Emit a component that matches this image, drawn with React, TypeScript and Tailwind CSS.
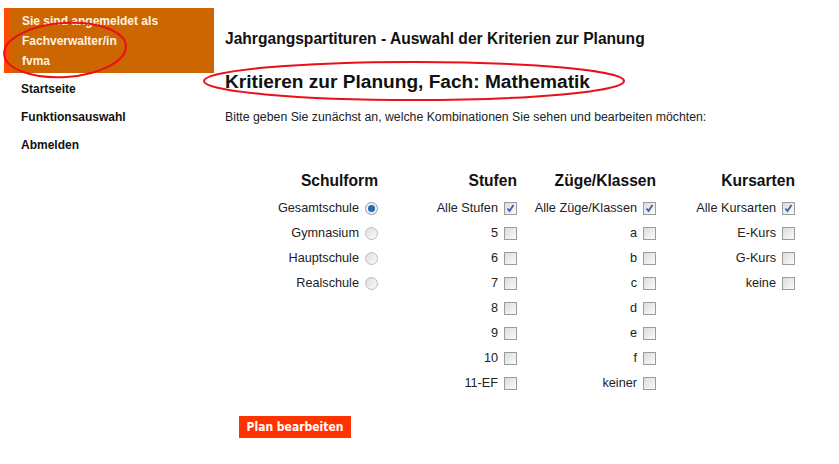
import React from 'react';

type Item = { label: string; checked?: boolean };

const columns: { title: string; type: 'radio' | 'check'; items: Item[] }[] = [
  {
    title: 'Schulform',
    type: 'radio',
    items: [
      { label: 'Gesamtschule', checked: true },
      { label: 'Gymnasium' },
      { label: 'Hauptschule' },
      { label: 'Realschule' },
    ],
  },
  {
    title: 'Stufen',
    type: 'check',
    items: [
      { label: 'Alle Stufen', checked: true },
      { label: '5' },
      { label: '6' },
      { label: '7' },
      { label: '8' },
      { label: '9' },
      { label: '10' },
      { label: '11-EF' },
    ],
  },
  {
    title: 'Züge/Klassen',
    type: 'check',
    items: [
      { label: 'Alle Züge/Klassen', checked: true },
      { label: 'a' },
      { label: 'b' },
      { label: 'c' },
      { label: 'd' },
      { label: 'e' },
      { label: 'f' },
      { label: 'keiner' },
    ],
  },
  {
    title: 'Kursarten',
    type: 'check',
    items: [
      { label: 'Alle Kursarten', checked: true },
      { label: 'E-Kurs' },
      { label: 'G-Kurs' },
      { label: 'keine' },
    ],
  },
];

const CheckBox: React.FC<{ checked?: boolean }> = ({ checked }) => (
  <span className="w-[13px] h-[13px] border border-[#9c9c9c] bg-gradient-to-br from-[#dcdcdc] to-[#fbfbfb] flex items-center justify-center">
    {checked && (
      <svg width="9" height="9" viewBox="0 0 9 9">
        <path d="M1.5 4.5 L3.5 7 L7.5 1" fill="none" stroke="#3d5fa8" strokeWidth="1.8" />
      </svg>
    )}
  </span>
);

const Radio: React.FC<{ checked?: boolean }> = ({ checked }) => (
  <span
    className={`w-[13px] h-[13px] rounded-full border flex items-center justify-center ${
      checked ? 'border-[#8c9fb5] bg-[#eef2f7]' : 'border-[#bdbdbd] bg-gradient-to-br from-[#dedede] to-[#fafafa]'
    }`}
  >
    {checked && <span className="w-[7px] h-[7px] rounded-full bg-[#1d6eb3]" />}
  </span>
);

export default function App() {
  return (
    <div className="relative w-[839px] h-[464px] bg-white text-[#1a1a1a] font-['Liberation_Sans',Arial,sans-serif] overflow-hidden">
      <div className="flex">
        {/* Sidebar */}
        <div className="pt-[8px] pl-[4px] w-[221px] shrink-0">
          <div className="w-[210px] h-[65px] bg-[#cc6600] border-l-[6px] border-[#ff4a00] pl-[12px] pt-[3px] text-[12px] leading-[20px] font-bold text-[#fff4e0]">
            <div>Sie sind angemeldet als</div>
            <div>Fachverwalter/in</div>
            <div>fvma</div>
          </div>
          <div className="pl-[17px] pt-[2px] text-[12px] leading-[28px] font-bold text-[#111]">
            <div>Startseite</div>
            <div>Funktionsauswahl</div>
            <div>Abmelden</div>
          </div>
        </div>

        {/* Main */}
        <div className="pl-[4px]">
          <h1 className="mt-[29px] text-[15.6px] leading-[20px] font-bold text-[#111]">
            Jahrgangspartituren - Auswahl der Kriterien zur Planung
          </h1>
          <h2 className="mt-[21px] text-[19.1px] leading-[24px] font-bold text-[#111]">
            Kritieren zur Planung, Fach: Mathematik
          </h2>
          <p className="mt-[15px] text-[12.3px] leading-[16px] text-[#222]">
            Bitte geben Sie zunächst an, welche Kombinationen Sie sehen und bearbeiten möchten:
          </p>

          <div className="ml-[14px] mt-[46px] grid grid-cols-[139px_139px_139px_139px] items-start">
            {columns.map((col) => (
              <div key={col.title} className="flex flex-col items-end">
                <div className="text-[15.6px] leading-[20px] font-bold text-[#111]">{col.title}</div>
                <div className="mt-[5px] flex flex-col items-end">
                  {col.items.map((it) => (
                    <div key={it.label} className="h-[25px] flex items-center gap-[6px] text-[12.7px] text-[#222]">
                      <span>{it.label}</span>
                      {col.type === 'radio' ? <Radio checked={it.checked} /> : <CheckBox checked={it.checked} />}
                    </div>
                  ))}
                </div>
              </div>
            ))}
          </div>

          <button className="ml-[14px] mt-[20px] w-[112px] h-[22px] bg-[#ff3300] text-white text-[12px] font-bold font-['DejaVu_Sans_Condensed','DejaVu_Sans',Verdana,sans-serif] flex items-center justify-center">
            Plan bearbeiten
          </button>
        </div>
      </div>

      {/* red annotation ellipses */}
      <svg className="absolute inset-0 pointer-events-none" width="839" height="464">
        <ellipse cx="65" cy="50" rx="61" ry="27" fill="none" stroke="#e8101a" strokeWidth="2" transform="rotate(-4 65 50)" />
        <ellipse cx="414" cy="81" rx="210" ry="19" fill="none" stroke="#e8101a" strokeWidth="2" />
      </svg>
    </div>
  );
}
